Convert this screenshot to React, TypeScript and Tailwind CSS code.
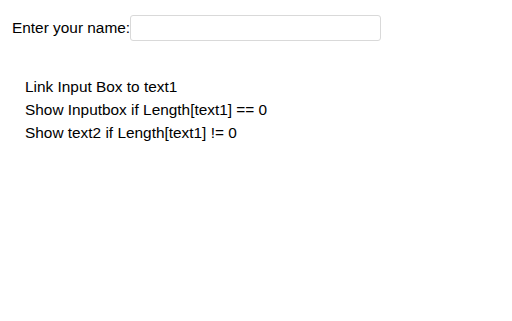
export default function App() {
  return (
    <div className="min-h-[321px] bg-white text-black font-['Liberation_Sans',Arial,sans-serif] text-[15.4px]">
      <div className="flex items-center pl-3 pt-[15px]">
        <span>Enter your name:</span>
        <input
          type="text"
          className="w-[251px] h-[26px] border border-[#d9d9d9] rounded-[3px] bg-white outline-none"
        />
      </div>
      <div className="pl-[25px] mt-[34px] leading-[23px]">
        <p>Link Input Box to text1</p>
        <p>Show Inputbox if Length[text1] == 0</p>
        <p>Show text2 if Length[text1] != 0</p>
      </div>
    </div>
  );
}
